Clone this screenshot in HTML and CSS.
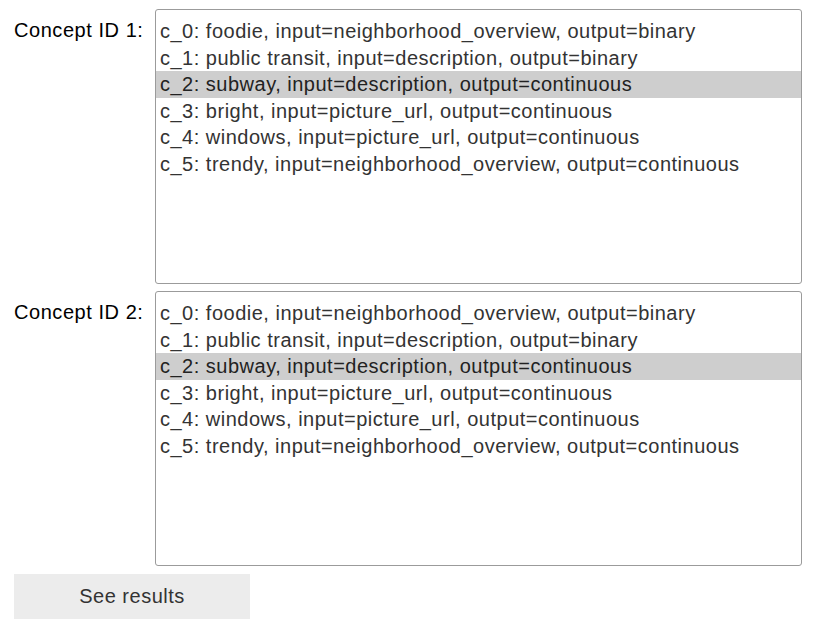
FILE: index.html
```html
<!DOCTYPE html>
<html>
<head>
<meta charset="utf-8">
<link rel="stylesheet" href="styles.css">
</head>
<body>
<div class="form">
  <div class="field">
    <div class="label">Concept ID 1:</div>
    <div class="listbox">
      <div class="opt">c_0: foodie, input=neighborhood_overview, output=binary</div>
      <div class="opt">c_1: public transit, input=description, output=binary</div>
      <div class="opt selected">c_2: subway, input=description, output=continuous</div>
      <div class="opt">c_3: bright, input=picture_url, output=continuous</div>
      <div class="opt">c_4: windows, input=picture_url, output=continuous</div>
      <div class="opt">c_5: trendy, input=neighborhood_overview, output=continuous</div>
    </div>
  </div>
  <div class="field">
    <div class="label">Concept ID 2:</div>
    <div class="listbox">
      <div class="opt">c_0: foodie, input=neighborhood_overview, output=binary</div>
      <div class="opt">c_1: public transit, input=description, output=binary</div>
      <div class="opt selected">c_2: subway, input=description, output=continuous</div>
      <div class="opt">c_3: bright, input=picture_url, output=continuous</div>
      <div class="opt">c_4: windows, input=picture_url, output=continuous</div>
      <div class="opt">c_5: trendy, input=neighborhood_overview, output=continuous</div>
    </div>
  </div>
  <button class="btn">See results</button>
</div>
</body>
</html>
```
FILE: styles.css
```css
html, body {
  margin: 0;
  padding: 0;
  background: #fff;
}
body {
  font-family: "Liberation Sans", Arial, sans-serif;
}
.form {
  padding: 9px 26px 0 14px;
  display: flex;
  flex-direction: column;
  gap: 7px;
}
.field {
  display: flex;
  align-items: flex-start;
}
.label {
  width: 141px;
  font-size: 20px;
  letter-spacing: 0.55px;
  color: #000;
  padding-top: 8px;
  line-height: 26.5px;
}
.listbox {
  width: 645px;
  border: 1px solid #9b9b9b;
  border-radius: 3px;
  padding-top: 8px;
  box-sizing: content-box;
  height: 265px;
}
.opt {
  font-size: 20px;
  letter-spacing: 0.5px;
  line-height: 26.6px;
  color: #333;
  padding-left: 4px;
  white-space: nowrap;
}
.opt.selected {
  background: #cecece;
  color: #222;
}
.btn {
  width: 236px;
  height: 45px;
  margin-top: 1px;
  background: #ececec;
  border: none;
  border-radius: 0;
  font-family: "Liberation Sans", Arial, sans-serif;
  font-size: 20px;
  letter-spacing: 0.5px;
  color: #333;
  padding: 0;
}
```
